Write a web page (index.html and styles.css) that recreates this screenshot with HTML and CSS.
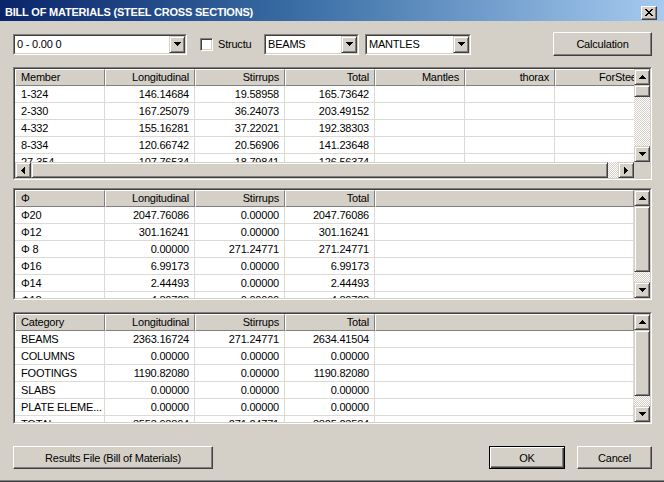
FILE: index.html
```html
<!DOCTYPE html>
<html>
<head>
<meta charset="utf-8">
<link rel="stylesheet" href="styles.css">
</head>
<body>
<div class="window">
  <div class="titlebar">
    <span class="title">BILL OF MATERIALS (STEEL CROSS SECTIONS)</span>
    <span class="close-btn"><svg width="8" height="7" viewBox="0 0 8 7"><path d="M0 0h2v1H0zM6 0h2v1H6zM1 1h2v1H1zM5 1h2v1H5zM2 2h4v1H2zM3 3h2v1H3zM2 4h4v1H2zM1 5h2v1H1zM5 5h2v1H5zM0 6h2v1H0zM6 6h2v1H6z"/></svg></span>
  </div>
  <div class="client">
    <div class="toolbar">
      <div class="combo combo-range"><div class="combo-inner"><span class="combo-text">0 - 0.00 0</span><span class="sb-btn combo-btn"><svg width="7" height="4" viewBox="0 0 7 4"><path d="M0 0h7v1H6v1H5v1H4v1H3V3H2V2H1V1H0z"/></svg></span></div></div>
      <div class="check"><span class="check-box"></span><span class="check-label">Structu</span></div>
      <div class="combo combo-type"><div class="combo-inner"><span class="combo-text">BEAMS</span><span class="sb-btn combo-btn"><svg width="7" height="4" viewBox="0 0 7 4"><path d="M0 0h7v1H6v1H5v1H4v1H3V3H2V2H1V1H0z"/></svg></span></div></div>
      <div class="combo combo-mantles"><div class="combo-inner"><span class="combo-text">MANTLES</span><span class="sb-btn combo-btn"><svg width="7" height="4" viewBox="0 0 7 4"><path d="M0 0h7v1H6v1H5v1H4v1H3V3H2V2H1V1H0z"/></svg></span></div></div>
      <button class="btn btn-calc">Calculation</button>
    </div>

    <div class="listview lv-members">
      <div class="lv-inner">
        <div class="lv-view">
          <div class="lv-grid cols-7">
            <div class="hd">Member</div><div class="hd r">Longitudinal</div><div class="hd r">Stirrups</div><div class="hd r">Total</div><div class="hd r">Mantles</div><div class="hd r">thorax</div><div class="hd r">ForSteel</div>
            <div class="td">1-324</div><div class="td r">146.14684</div><div class="td r">19.58958</div><div class="td r">165.73642</div><div class="td"></div><div class="td"></div><div class="td"></div>
            <div class="td">2-330</div><div class="td r">167.25079</div><div class="td r">36.24073</div><div class="td r">203.49152</div><div class="td"></div><div class="td"></div><div class="td"></div>
            <div class="td">4-332</div><div class="td r">155.16281</div><div class="td r">37.22021</div><div class="td r">192.38303</div><div class="td"></div><div class="td"></div><div class="td"></div>
            <div class="td">8-334</div><div class="td r">120.66742</div><div class="td r">20.56906</div><div class="td r">141.23648</div><div class="td"></div><div class="td"></div><div class="td"></div>
            <div class="td">27-354</div><div class="td r">107.76534</div><div class="td r">18.79841</div><div class="td r">126.56374</div><div class="td"></div><div class="td"></div><div class="td"></div>
          </div>
        </div>
        <div class="vscroll">
          <span class="sb-btn sb-v"><svg width="7" height="4" viewBox="0 0 7 4"><path d="M3 0h1v1h1v1h1v1h1v1H0V3h1V2h1V1h1z"/></svg></span>
          <span class="sb-btn thumb-v-small"></span>
          <span class="sb-track"></span>
          <span class="sb-btn sb-v"><svg width="7" height="4" viewBox="0 0 7 4"><path d="M0 0h7v1H6v1H5v1H4v1H3V3H2V2H1V1H0z"/></svg></span>
        </div>
        <div class="hscroll">
          <span class="sb-btn sb-h"><svg width="4" height="7" viewBox="0 0 4 7"><path d="M3 0h1v7H3V6H2V5H1V4H0V3h1V2h1V1h1z"/></svg></span>
          <span class="sb-btn thumb-h"></span>
          <span class="sb-track"></span>
          <span class="sb-btn sb-h"><svg width="4" height="7" viewBox="0 0 4 7"><path d="M0 0h1v1h1v1h1v1h1v1H3v1H2v1H1v1H0z"/></svg></span>
        </div>
        <div class="sb-corner"></div>
      </div>
    </div>

    <div class="listview lv-bars">
      <div class="lv-inner">
        <div class="lv-view">
          <div class="lv-grid cols-4">
            <div class="hd">Φ</div><div class="hd r">Longitudinal</div><div class="hd r">Stirrups</div><div class="hd r">Total</div><div class="hd"></div>
            <div class="td">Φ20</div><div class="td r">2047.76086</div><div class="td r">0.00000</div><div class="td r">2047.76086</div><div class="td"></div>
            <div class="td">Φ12</div><div class="td r">301.16241</div><div class="td r">0.00000</div><div class="td r">301.16241</div><div class="td"></div>
            <div class="td">Φ 8</div><div class="td r">0.00000</div><div class="td r">271.24771</div><div class="td r">271.24771</div><div class="td"></div>
            <div class="td">Φ16</div><div class="td r">6.99173</div><div class="td r">0.00000</div><div class="td r">6.99173</div><div class="td"></div>
            <div class="td">Φ14</div><div class="td r">2.44493</div><div class="td r">0.00000</div><div class="td r">2.44493</div><div class="td"></div>
            <div class="td">Φ18</div><div class="td r">4.80728</div><div class="td r">0.00000</div><div class="td r">4.80728</div><div class="td"></div>
          </div>
        </div>
        <div class="vscroll">
          <span class="sb-btn sb-v"><svg width="7" height="4" viewBox="0 0 7 4"><path d="M3 0h1v1h1v1h1v1h1v1H0V3h1V2h1V1h1z"/></svg></span>
          <span class="sb-btn thumb-v-large"></span>
          <span class="sb-track"></span>
          <span class="sb-btn sb-v"><svg width="7" height="4" viewBox="0 0 7 4"><path d="M0 0h7v1H6v1H5v1H4v1H3V3H2V2H1V1H0z"/></svg></span>
        </div>
      </div>
    </div>

    <div class="listview lv-cats">
      <div class="lv-inner">
        <div class="lv-view">
          <div class="lv-grid cols-4">
            <div class="hd">Category</div><div class="hd r">Longitudinal</div><div class="hd r">Stirrups</div><div class="hd r">Total</div><div class="hd"></div>
            <div class="td">BEAMS</div><div class="td r">2363.16724</div><div class="td r">271.24771</div><div class="td r">2634.41504</div><div class="td"></div>
            <div class="td">COLUMNS</div><div class="td r">0.00000</div><div class="td r">0.00000</div><div class="td r">0.00000</div><div class="td"></div>
            <div class="td">FOOTINGS</div><div class="td r">1190.82080</div><div class="td r">0.00000</div><div class="td r">1190.82080</div><div class="td"></div>
            <div class="td">SLABS</div><div class="td r">0.00000</div><div class="td r">0.00000</div><div class="td r">0.00000</div><div class="td"></div>
            <div class="td">PLATE ELEME...</div><div class="td r">0.00000</div><div class="td r">0.00000</div><div class="td r">0.00000</div><div class="td"></div>
            <div class="td">TOTAL</div><div class="td r">3553.98804</div><div class="td r">271.24771</div><div class="td r">3825.23584</div><div class="td"></div>
          </div>
        </div>
        <div class="vscroll">
          <span class="sb-btn sb-v"><svg width="7" height="4" viewBox="0 0 7 4"><path d="M3 0h1v1h1v1h1v1h1v1H0V3h1V2h1V1h1z"/></svg></span>
          <span class="sb-btn thumb-v-large"></span>
          <span class="sb-track"></span>
          <span class="sb-btn sb-v"><svg width="7" height="4" viewBox="0 0 7 4"><path d="M0 0h7v1H6v1H5v1H4v1H3V3H2V2H1V1H0z"/></svg></span>
        </div>
      </div>
    </div>

    <div class="footer">
      <button class="btn btn-results">Results File (Bill of Materials)</button>
      <div class="footer-right">
        <button class="btn btn-default btn-ok">OK</button>
        <button class="btn btn-cancel">Cancel</button>
      </div>
    </div>
  </div>
</div>
</body>
</html>
```

FILE: styles.css
```css
html, body {
  margin: 0;
  padding: 0;
}
body {
  width: 664px;
  height: 482px;
  overflow: hidden;
  background: #d4d0c8;
  font-family: "Liberation Sans", Arial, sans-serif;
  font-size: 11px;
  letter-spacing: -0.2px;
  color: #000;
}
.window {
  height: 482px;
  box-sizing: border-box;
  display: flex;
  flex-direction: column;
  border-bottom: 1px solid #404040;
}
.titlebar {
  height: 21px;
  box-sizing: border-box;
  padding: 4px 7px 0 5px;
  display: flex;
  align-items: center;
  justify-content: space-between;
  background: linear-gradient(to right, #0a246a 0%, #3a6ea5 45%, #a6caf0 100%);
}
.title {
  color: #fff;
  font-weight: bold;
  font-size: 11px;
  letter-spacing: -0.2px;
  line-height: 17px;
}
.close-btn {
  width: 16px;
  height: 14px;
  box-sizing: border-box;
  background: #d4d0c8;
  border: 1px solid;
  border-color: #fff #404040 #404040 #fff;
  box-shadow: inset -1px -1px #808080;
  display: flex;
  align-items: center;
  justify-content: center;
  padding: 0 1px 1px 0;
}
.close-btn svg, .sb-btn svg {
  display: block;
  fill: #000;
}
.client {
  flex: 1;
  display: flex;
  flex-direction: column;
  padding: 11px 12px 0 13px;
  border-bottom: 1px solid #808080;
}

/* toolbar */
.toolbar {
  height: 24px;
  display: flex;
  align-items: center;
}
.combo {
  height: 21px;
  box-sizing: border-box;
  border: 1px solid;
  border-color: #808080 #fff #fff #808080;
  display: flex;
}
.combo-inner {
  flex: 1;
  display: flex;
  background: #fff;
  border: 1px solid;
  border-color: #404040 #d4d0c8 #d4d0c8 #404040;
}
.combo-text {
  flex: 1;
  padding-left: 2px;
  line-height: 17px;
  white-space: nowrap;
  overflow: hidden;
}
.combo-btn {
  width: 16px;
  flex: none;
}
.combo-range { width: 174px; }
.combo-type { width: 95px; }
.combo-mantles { width: 106px; margin-left: 6px; }
.check {
  margin-left: 13px;
  width: 64px;
  display: flex;
  align-items: center;
}
.check-box {
  width: 13px;
  height: 13px;
  box-sizing: border-box;
  background: #fff;
  border: 1px solid;
  border-color: #808080 #fff #fff #808080;
  box-shadow: inset 1px 1px #404040, inset -1px -1px #d4d0c8;
}
.check-label {
  margin-left: 5px;
}

/* buttons */
.btn {
  font: inherit;
  letter-spacing: inherit;
  color: #000;
  background: #d4d0c8;
  height: 23px;
  box-sizing: border-box;
  padding: 0;
  border: 1px solid;
  border-color: #fff #404040 #404040 #fff;
  box-shadow: inset -1px -1px #808080;
}
.btn-calc {
  margin-left: auto;
  width: 99px;
  height: 24px;
}
.btn-default {
  border: 1px solid #000;
  box-shadow: inset 1px 1px #fff, inset -1px -1px #404040, inset -2px -2px #808080;
}

/* list views */
.listview {
  border: 1px solid;
  border-color: #808080 #fff #fff #808080;
}
.lv-inner {
  border: 1px solid;
  border-color: #404040 #d4d0c8 #d4d0c8 #404040;
  background: #fff;
  display: grid;
  grid-template-columns: 1fr 16px;
}
.lv-members { margin-top: 11px; }
.lv-members .lv-inner { grid-template-rows: 93px 16px; }
.lv-bars { margin-top: 8px; }
.lv-cats { margin-top: 12px; }
.lv-bars .lv-inner, .lv-cats .lv-inner { grid-template-rows: 108px; }

.lv-view {
  overflow: hidden;
  min-width: 0;
}
.lv-grid {
  display: grid;
  grid-auto-rows: 17px;
}
.cols-7 { grid-template-columns: repeat(7, 90px); }
.cols-4 { grid-template-columns: repeat(4, 90px) 1fr; }

.hd {
  box-sizing: border-box;
  background: #d4d0c8;
  border-top: 1px solid #fff;
  border-left: 1px solid #fff;
  border-right: 1px solid #808080;
  border-bottom: 1px solid #808080;
  padding: 0 5px;
  line-height: 15px;
  white-space: nowrap;
  overflow: hidden;
}
.td {
  box-sizing: border-box;
  border-right: 1px solid #dcdad5;
  border-bottom: 1px solid #dcdad5;
  padding: 0 5px 0 6px;
  line-height: 16px;
  white-space: nowrap;
  overflow: hidden;
}
.r { text-align: right; }

/* scrollbars */
.sb-btn {
  box-sizing: border-box;
  background: #d4d0c8;
  border: 1px solid;
  border-color: #d4d0c8 #404040 #404040 #d4d0c8;
  box-shadow: inset 1px 1px #fff, inset -1px -1px #808080;
  display: flex;
  align-items: center;
  justify-content: center;
}
.sb-track {
  flex: 1;
  background-color: #fff;
  background-image: conic-gradient(#d4d0c8 25%, #fff 0 50%, #d4d0c8 0 75%, #fff 0);
  background-size: 2px 2px;
}
.vscroll {
  display: flex;
  flex-direction: column;
}
.sb-v { height: 16px; flex: none; }
.thumb-v-small { height: 12px; flex: none; }
.thumb-v-large { height: 66px; flex: none; }
.hscroll {
  display: flex;
}
.sb-h { width: 16px; flex: none; }
.thumb-h { width: 577px; flex: none; }
.sb-corner { background: #d4d0c8; }

/* footer */
.footer {
  margin-top: 22px;
  display: flex;
  justify-content: space-between;
}
.btn-results { width: 200px; }
.footer-right {
  display: flex;
  gap: 12px;
}
.btn-ok { width: 76px; }
.btn-cancel { width: 75px; }
```
